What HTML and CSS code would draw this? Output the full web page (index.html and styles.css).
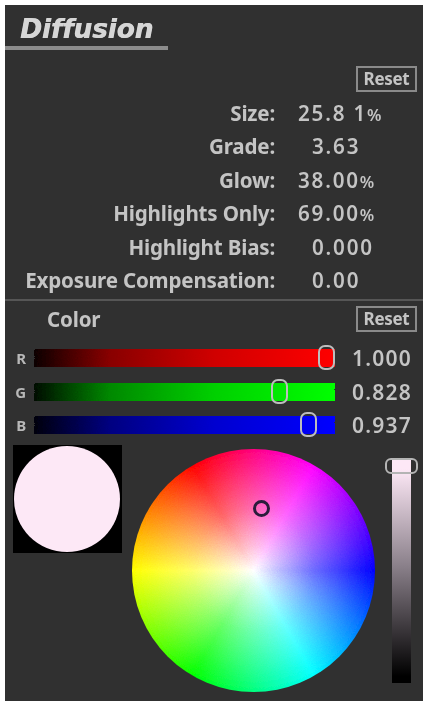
FILE: index.html
```html
<!DOCTYPE html>
<html>
<head>
    <title>Diffusion</title>
    <link rel="stylesheet" href="styles.css">
</head>
<body>
    <svg class="defs" width="0" height="0">
        <filter id="dither" x="0" y="0" width="100%" height="100%">
            <feTurbulence type="fractalNoise" baseFrequency="0.9" numOctaves="2" seed="4" result="noise"/>
            <feDisplacementMap in="SourceGraphic" in2="noise" scale="7" xChannelSelector="R" yChannelSelector="G"/>
        </filter>
    </svg>
    <div class="panel">
        <div class="title-bar"><h1>Diffusion</h1></div>
        <div class="reset-row"><button class="reset">Reset</button></div>
        <div class="params">
            <div class="param"><span class="label">Size:</span><span class="value">25.8 1<small>%</small></span></div>
            <div class="param"><span class="label">Grade:</span><span class="value indent">3.63</span></div>
            <div class="param"><span class="label">Glow:</span><span class="value">38.00<small>%</small></span></div>
            <div class="param"><span class="label">Highlights Only:</span><span class="value">69.00<small>%</small></span></div>
            <div class="param"><span class="label">Highlight Bias:</span><span class="value indent">0.000</span></div>
            <div class="param"><span class="label">Exposure Compensation:</span><span class="value indent">0.00</span></div>
        </div>
        <div class="divider"></div>
        <div class="color-head">
            <span class="color-title">Color</span>
            <button class="reset">Reset</button>
        </div>
        <div class="sliders">
            <div class="slider-row">
                <span class="channel">R</span>
                <div class="track">
                    <div class="track-clip"><div class="track-fill red"></div></div>
                    <div class="handle" style="left: 284px"></div>
                </div>
                <span class="channel-value">1.000</span>
            </div>
            <div class="slider-row">
                <span class="channel">G</span>
                <div class="track">
                    <div class="track-clip"><div class="track-fill green"></div></div>
                    <div class="handle" style="left: 237px"></div>
                </div>
                <span class="channel-value">0.828</span>
            </div>
            <div class="slider-row">
                <span class="channel">B</span>
                <div class="track">
                    <div class="track-clip"><div class="track-fill blue"></div></div>
                    <div class="handle" style="left: 266px"></div>
                </div>
                <span class="channel-value">0.937</span>
            </div>
        </div>
        <div class="picker">
            <div class="preview"><div class="swatch"></div></div>
            <div class="wheel">
                <div class="wheel-clip"><div class="wheel-fill"></div></div>
                <div class="marker"></div>
            </div>
            <div class="value-strip"><div class="strip-handle"></div></div>
        </div>
    </div>
</body>
</html>
```

FILE: styles.css
```css
* {
    margin: 0;
    padding: 0;
    box-sizing: border-box;
}

body {
    background: #fff;
    overflow: hidden;
}

.defs {
    position: absolute;
}

.panel {
    width: 418px;
    height: 696px;
    margin: 5px 0 0 5px;
    background: #303030;
    color: #c4c4c4;
    font-family: "Noto Sans", sans-serif;
    font-weight: 700;
    font-size: 20.6px;
    letter-spacing: -0.2px;
    overflow: hidden;
    filter: blur(0.45px);
}

.title-bar {
    width: 163px;
    height: 45px;
    padding: 7px 0 0 15px;
    border-bottom: 4px solid #8c8c8c;
}

h1 {
    font-family: "DejaVu Sans", sans-serif;
    font-size: 26.5px;
    font-style: italic;
    font-weight: bold;
    line-height: 34px;
    letter-spacing: -0.2px;
    color: #d6d6d6;
    text-shadow: 0.5px 0 0 #d6d6d6;
}

.reset-row {
    display: flex;
    justify-content: flex-end;
    margin-top: 16px;
    padding-right: 6px;
}

.reset {
    width: 61px;
    height: 26px;
    background: none;
    border: 2px solid #8a8a8a;
    color: #c4c4c4;
    font-family: "Noto Sans", sans-serif;
    font-weight: 700;
    font-size: 17px;
    letter-spacing: -0.3px;
    line-height: 20px;
}

.params {
    margin-top: 4px;
}

.param {
    display: flex;
    height: 33.5px;
    align-items: center;
    gap: 23px;
}

.label {
    width: 270px;
    text-align: right;
    white-space: nowrap;
}

.value {
    font-weight: 600;
    letter-spacing: 1.8px;
    white-space: nowrap;
}

.value small {
    font-size: 16.5px;
    letter-spacing: 0;
}

.indent {
    margin-left: 14px;
}

.divider {
    height: 2px;
    margin-top: 2px;
    background: #565656;
}

.color-head {
    display: flex;
    justify-content: space-between;
    align-items: center;
    height: 26px;
    margin-top: 5px;
    padding: 0 6px 0 42px;
}

.sliders {
    display: flex;
    flex-direction: column;
    gap: 15.5px;
    margin-top: 17px;
}

.slider-row {
    display: flex;
    align-items: center;
    height: 18px;
}

.channel {
    width: 29px;
    padding-right: 8px;
    text-align: right;
    font-size: 15px;
    color: #b8b8b8;
}

.track {
    position: relative;
    width: 301px;
    height: 18px;
}

.track-clip {
    height: 100%;
    overflow: hidden;
}

/* taller than the clip so the dither doesn't chew the top and bottom edges */
.track-fill {
    height: 30px;
    margin-top: -6px;
    filter: url(#dither);
}

.red {
    background: linear-gradient(to right, #0c0000, #880000 25%, #d00000 60%, #f00);
}

.green {
    background: linear-gradient(to right, #000c00, #008800 25%, #00d000 60%, #0f0);
}

.blue {
    background: linear-gradient(to right, #00000c, #000080 25%, #0000d0 60%, #00f);
}

.handle {
    position: absolute;
    top: -4px;
    width: 17px;
    height: 25px;
    border: 2px solid #bdbdbd;
    border-radius: 7px;
}

.channel-value {
    margin-left: 17px;
    font-size: 21px;
    font-weight: 600;
    letter-spacing: 1.2px;
}

.picker {
    display: flex;
    align-items: flex-start;
    margin-top: 11px;
    padding-left: 8px;
}

.preview {
    width: 109px;
    height: 108px;
    padding: 1px 2px 1px 1px;
    background: #000;
}

.swatch {
    width: 106px;
    height: 106px;
    border-radius: 50%;
    background: #fde8f6;
}

.wheel {
    position: relative;
    width: 243px;
    height: 243px;
    margin: 4px 0 0 10px;
}

.wheel-clip {
    width: 100%;
    height: 100%;
    border-radius: 50%;
    overflow: hidden;
}

.wheel-fill {
    width: 259px;
    height: 259px;
    margin: -8px;
    background:
        radial-gradient(circle 121.5px at center, #fff 0%, rgba(255, 255, 255, 0.75) 20%, rgba(255, 255, 255, 0.42) 50%, rgba(255, 255, 255, 0) 100%),
        conic-gradient(from 30deg, #f0f, #00f, #0ff, #0f0, #ff0, #f00, #f0f);
    filter: url(#dither);
}

.marker {
    position: absolute;
    left: 121px;
    top: 51px;
    width: 17px;
    height: 17px;
    border: 3px solid #2c1c3c;
    border-radius: 50%;
}

.value-strip {
    position: relative;
    width: 19px;
    height: 225px;
    margin: 13px 0 0 17px;
    background: linear-gradient(to bottom, #fde8f6 0%, #fde8f6 5%, #8a808a 48%, #000 97%);
}

.strip-handle {
    position: absolute;
    left: -7px;
    top: 0;
    width: 33px;
    height: 16px;
    border: 2px solid #b4b4b4;
    border-radius: 6px;
}
```
